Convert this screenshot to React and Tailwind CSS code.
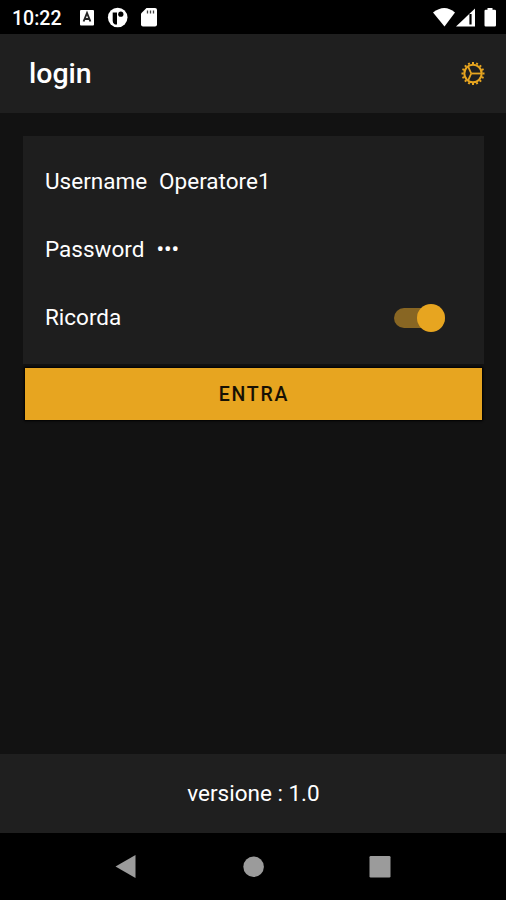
const TEETH = Array.from({ length: 16 }, (_, i) => i * 22.5);
const SPOKES = ["M-1.800 0H8.500", "M-1.800 0-4.800-6.800", "M-1.800 0-4.800 6.800"];

function GearIcon() {
  return (
    <svg width="26" height="26" viewBox="-13 -12.500 26 26" fill="none" stroke="#e7a520">
      <circle r="8.700" strokeWidth="2.100" />
      {TEETH.map((angle) => (
        <path key={angle} d="M9.500 0h2" strokeWidth="2" transform={`rotate(${angle})`} />
      ))}
      {SPOKES.map((d) => (
        <path key={d} d={d} strokeWidth="1.800" />
      ))}
    </svg>
  );
}

function StatusBar() {
  return (
    <div className="flex h-[34px] items-center bg-black pt-[2px] text-white">
      <span className="ml-[12px] w-[67px] pt-[2px] text-[19.5px] leading-none font-medium">10:22</span>
      <svg width="80" height="22" viewBox="79 7 80 22" fill="#fff">
        <rect x="80" y="10" width="14" height="15.5" rx="1" />
        <path d="M83.6 21.5 87 13l3.4 8.500M84.700 19h4.600" fill="none" stroke="#222" strokeWidth="1.900" />
        <circle cx="117.700" cy="17.500" r="9.800" />
        <path d="M112.700 12.500h4.300v12h-2.100q-2.200-1-2.200-3.500z" fill="#000" />
        <circle cx="120.800" cy="14.200" r="2.600" fill="#000" />
        <path d="M146.500 8H155q2 0 2 2v14.500q0 2-2 2h-12q-2 0-2-2V13.500z" />
        <path d="M147.500 10.500v3M150.500 10.500v3M153.500 10.500v3" stroke="#444" strokeWidth="1.300" />
      </svg>
      <svg className="ml-auto mr-[8px]" width="66" height="22" viewBox="432 7 66 22" fill="#fff">
        <path d="M433 12.500q11.500-9 22 0L444.500 26.500z" />
        <path d="M456 26.500 475 8.500v18z" />
        <path d="M470.500 14v10.500" stroke="#000" strokeWidth="2.200" />
        <path d="M487.500 8h5v1.800h2.300q1.200 0 1.200 1.200v14.300q0 1.200-1.200 1.200h-9.100q-1.200 0-1.200-1.200V11q0-1.200 1.200-1.200h1.800z" />
      </svg>
    </div>
  );
}

function NavigationBar() {
  return (
    <div className="h-[67px] bg-black">
      <svg width="506" height="67" viewBox="0 833 506 67" fill="#9b9b9b">
        <path d="M115.500 866.500 135.500 855v23z" />
        <circle cx="253.600" cy="866.700" r="10.300" />
        <rect x="369.500" y="856" width="21" height="21.500" rx="1.200" />
      </svg>
    </div>
  );
}

export default function App() {
  return (
    <div className="flex h-[900px] w-[506px] flex-col overflow-hidden bg-[#121212] font-['Roboto',sans-serif] text-white">
      <StatusBar />
      <header className="flex h-[79px] items-center justify-between bg-[#1f1f1f] pr-[20px] pl-[29px]">
        <h1 className="pt-[2px] text-[28.500px] leading-none font-medium">login</h1>
        <GearIcon />
      </header>
      <main className="flex-1 px-[23px] pt-[23px]">
        <section className="h-[228px] w-[461px] bg-[#1e1e1e] pt-[11px] pl-[22px] text-[22.500px]">
          <label className="flex h-[68.500px] items-center gap-[12px] pt-px">
            <span>Username</span>
            <span>Operatore1</span>
          </label>
          <label className="flex h-[68.500px] items-center gap-[12px] pt-px">
            <span>Password</span>
            <span>•••</span>
          </label>
          <label className="flex h-[68.500px] items-center justify-between pr-[39px]">
            <span>Ricorda</span>
            <span className="flex h-[20px] w-[51px] items-center justify-end rounded-full bg-[#886623]">
              <span className="size-[28px] shrink-0 rounded-full bg-[#e7a520]" />
            </span>
          </label>
        </section>
        <button className="mx-[2px] mt-[4px] flex h-[52px] w-[457px] items-center justify-center bg-[#e7a520] pt-px pl-px text-[19.500px] tracking-[1.800px] text-[#171104] shadow-[0_0_2px_1px_#000] font-medium">
          ENTRA
        </button>
      </main>
      <footer className="flex h-[79px] items-center justify-center bg-[#1f1f1f] pt-px pl-px text-[22.500px]">
        versione : 1.0
      </footer>
      <NavigationBar />
    </div>
  );
}
